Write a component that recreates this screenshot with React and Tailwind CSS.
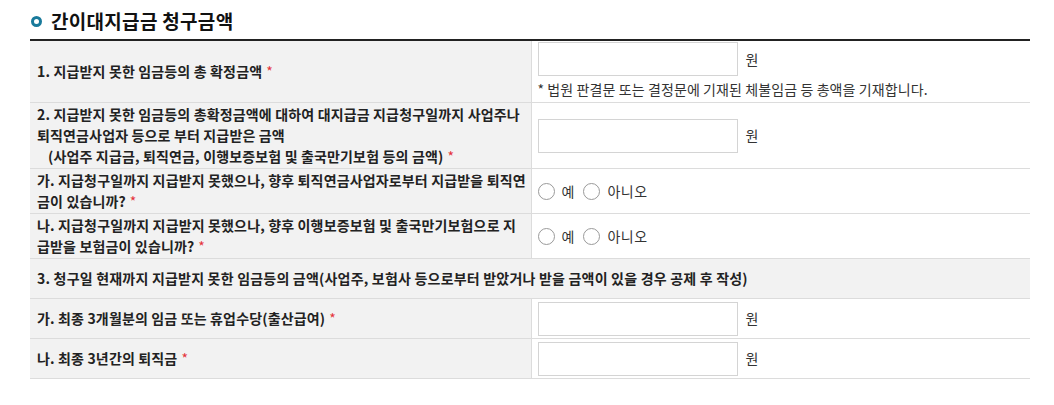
import React from "react";

const Req = () => <span className="ml-[4px] text-[#e5323b] font-normal">*</span>;

function Won() {
  return (
    <div className="flex items-center">
      <input type="text" className="w-[200px] h-[34px] border border-[#d4d4d4] bg-white outline-none" />
      <span className="ml-2 text-[14px] text-[#333]">원</span>
    </div>
  );
}

function YesNo({ name }) {
  return (
    <div className="flex items-center text-[14px] text-[#333]">
      <label className="flex items-center">
        <input type="radio" name={name} className="appearance-none w-[17px] h-[17px] rounded-full border border-[#9a9a9a] bg-white" />
        <span className="ml-[7px]">예</span>
      </label>
      <label className="flex items-center ml-[9px]">
        <input type="radio" name={name} className="appearance-none w-[17px] h-[17px] rounded-full border border-[#9a9a9a] bg-white" />
        <span className="ml-[7px] tracking-[0.5px]">아니오</span>
      </label>
    </div>
  );
}

export default function App() {
  const th = "bg-[#f2f2f2] text-left align-middle pl-[7px] pr-[3px] py-[1px] text-[14px] tracking-[0.15px] leading-[21px] font-bold text-[#222] break-all border-b border-r border-[#dcdcdc]";
  const td = "align-middle pl-[6px] border-b border-[#dcdcdc]";

  return (
    <div className="bg-white w-[1054px] h-[405px] pl-[30px] pt-[10px] font-['Malgun_Gothic','Noto_Sans_CJK_KR',sans-serif]">
      <h2 className="flex items-center h-[23px] text-[19px] tracking-[0.3px] font-bold text-[#111]">
        <span className="w-[11px] h-[11px] rounded-full border-[3px] border-[#197a9b] mr-[9px] ml-[1px]"></span>
        간이대지급금 청구금액
      </h2>

      <table className="mt-[6px] w-[1000px] border-collapse border-t-2 border-[#222] table-fixed">
        <colgroup>
          <col className="w-[501px]" />
          <col />
        </colgroup>
        <tbody>
          <tr className="h-[62px]">
            <th className={th}>1. 지급받지 못한 임금등의 총 확정금액<Req /></th>
            <td className={td + " pt-[1px]"}>
              <Won />
              <p className="text-[14px] tracking-[0.1px] text-[#333] leading-[26px]">* 법원 판결문 또는 결정문에 기재된 체불임금 등 총액을 기재합니다.</p>
            </td>
          </tr>
          <tr className="h-[66px]">
            <th className={th}>
              2. 지급받지 못한 임금등의 총확정금액에 대하여 대지급금 지급청구일까지 사업주나
              <br />
              퇴직연금사업자 등으로 부터 지급받은 금액
              <br />
              <span className="pl-[11px]">(사업주 지급금, 퇴직연금, 이행보증보험 및 출국만기보험 등의 금액)</span><Req />
            </th>
            <td className={td}>
              <Won />
            </td>
          </tr>
          <tr className="h-[45px]">
            <th className={th}>가. 지급청구일까지 지급받지 못했으나, 향후 퇴직연금사업자로부터 지급받을 퇴직연금이 있습니까?<Req /></th>
            <td className={td}>
              <YesNo name="q1" />
            </td>
          </tr>
          <tr className="h-[45px]">
            <th className={th}>나. 지급청구일까지 지급받지 못했으나, 향후 이행보증보험 및 출국만기보험으로 지급받을 보험금이 있습니까?<Req /></th>
            <td className={td}>
              <YesNo name="q2" />
            </td>
          </tr>
          <tr className="h-[40px]">
            <th colSpan={2} className="bg-[#f2f2f2] text-left align-middle pl-[7px] text-[14px] tracking-[0.2px] font-bold text-[#222] border-b border-[#dcdcdc]">
              3. 청구일 현재까지 지급받지 못한 임금등의 금액(사업주, 보험사 등으로부터 받았거나 받을 금액이 있을 경우 공제 후 작성)
            </th>
          </tr>
          <tr className="h-[40px]">
            <th className={th}>가. 최종 3개월분의 임금 또는 휴업수당(출산급여)<Req /></th>
            <td className={td}>
              <Won />
            </td>
          </tr>
          <tr className="h-[40px]">
            <th className={th}>나. 최종 3년간의 퇴직금<Req /></th>
            <td className={td}>
              <Won />
            </td>
          </tr>
        </tbody>
      </table>
    </div>
  );
}
